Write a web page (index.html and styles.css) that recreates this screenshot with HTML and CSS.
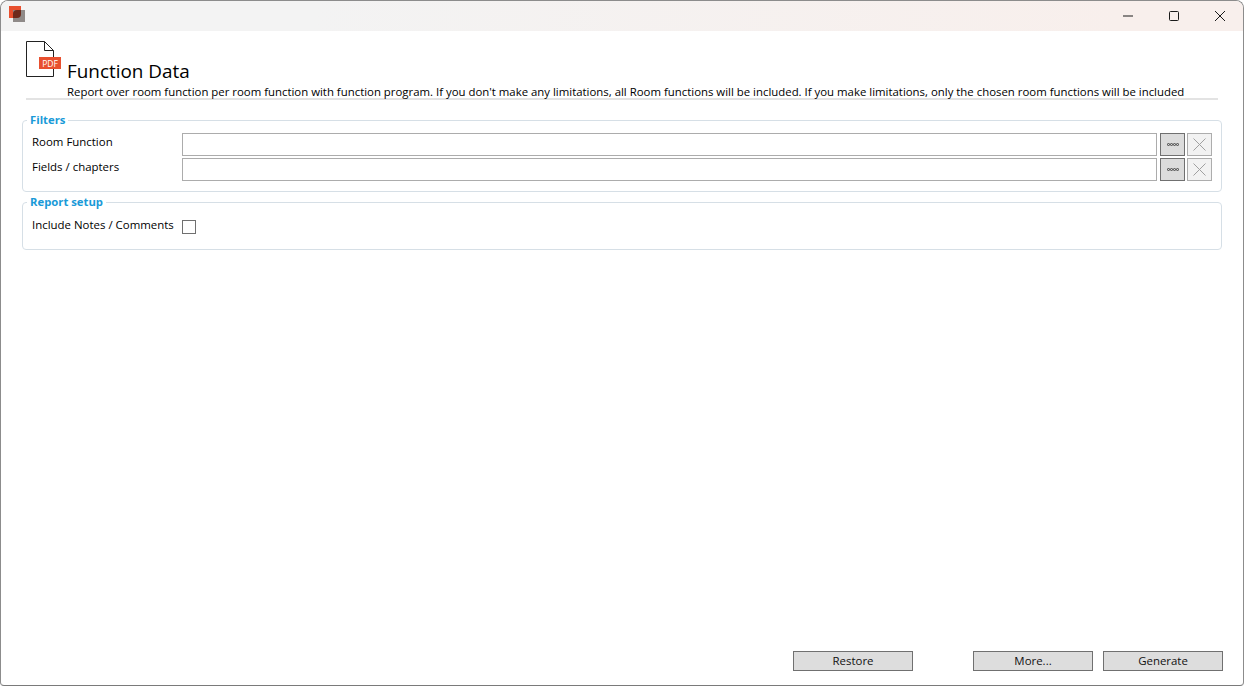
FILE: index.html
```html
<!DOCTYPE html>
<html lang="en">
<head>
<meta charset="utf-8">
<title>Function Data</title>
<link rel="stylesheet" href="styles.css">
</head>
<body>
<div class="window">
  <div class="titlebar">
    <svg class="app-icon" width="16" height="16" viewBox="0 0 16 16">
      <rect x="0" y="0" width="12" height="12" fill="#e8502f"/>
      <rect x="4" y="4" width="12" height="12" fill="#8f8a88"/>
      <path d="M4 12V8a4 4 0 0 1 4-4h4v4a4 4 0 0 1-4 4z" fill="#6d2a1c"/>
    </svg>
    <div class="controls">
      <svg class="ctl" width="46" height="30" viewBox="0 0 46 30"><path d="M18 15h10" stroke="#1a1a1a" fill="none"/></svg>
      <svg class="ctl" width="46" height="30" viewBox="0 0 46 30"><rect x="18.5" y="10.5" width="9" height="9" rx="1" stroke="#1a1a1a" fill="none"/></svg>
      <svg class="ctl" width="46" height="30" viewBox="0 0 46 30"><path d="M18 10l10 10M28 10l-10 10" stroke="#1a1a1a" fill="none"/></svg>
    </div>
  </div>
  <div class="content">
    <header class="header">
      <svg class="pdf-icon" width="36" height="37" viewBox="0 0 36 37">
        <path d="M.5.5h18l9 9v26H.5z" fill="#fff" stroke="#222"/>
        <path d="M18.500.5v9h9" fill="none" stroke="#222"/>
        <rect x="13" y="16" width="22" height="12" fill="#e8502f"/>
        <text x="24" y="25.500" class="pdf-text" text-anchor="middle">PDF</text>
      </svg>
      <div class="header-text">
        <h1>Function Data</h1>
        <p>Report over room function per room function with function program. If you don't make any limitations, all Room functions will be included. If you make limitations, only the chosen room functions will be included</p>
      </div>
    </header>
    <fieldset class="group filters">
      <legend>Filters</legend>
      <div class="row">
        <label>Room Function</label>
        <div class="input"></div>
        <button class="pick"><span class="dots"><i></i><i></i><i></i><i></i></span></button>
        <button class="clear"><svg width="13" height="13" viewBox="0 0 13 13"><path d="M.5.5l12 12M12.500.5l-12 12" stroke="#a0a0a0" fill="none"/></svg></button>
      </div>
      <div class="row">
        <label>Fields / chapters</label>
        <div class="input"></div>
        <button class="pick"><span class="dots"><i></i><i></i><i></i><i></i></span></button>
        <button class="clear"><svg width="13" height="13" viewBox="0 0 13 13"><path d="M.5.5l12 12M12.500.5l-12 12" stroke="#a0a0a0" fill="none"/></svg></button>
      </div>
    </fieldset>
    <fieldset class="group setup">
      <legend>Report setup</legend>
      <div class="row check-row">
        <label>Include Notes / Comments</label>
        <span class="checkbox"></span>
      </div>
    </fieldset>
    <div class="spacer"></div>
    <footer class="footer">
      <button class="btn">Restore</button>
      <button class="btn gap-left">More...</button>
      <button class="btn">Generate</button>
    </footer>
  </div>
</div>
</body>
</html>
```
FILE: styles.css
```css
* { box-sizing: border-box; }
html, body { margin: 0; height: 100%; }
body { background: #fff; font-family: "Open Sans", "Noto Sans", sans-serif; font-size: 11.45px; color: #000; overflow: hidden; }
.window { width: 1244px; height: 686px; border: 1px solid #8c8c8c; border-bottom-color: #7a7a7a; border-radius: 8px 8px 4px 4px; display: flex; flex-direction: column; overflow: hidden; background: #fff; }
.titlebar { height: 30px; flex: none; display: flex; align-items: center; justify-content: space-between; background: linear-gradient(90deg, #f3f3f3 0%, #f3f3f3 25%, #f8efec 90%); padding-left: 8px; }
.app-icon { display: block; margin-top: -4px; }
.controls { display: flex; }
.ctl { display: block; }
.content { flex: 1; display: flex; flex-direction: column; padding: 10px 20px 14px 21px; min-height: 0; }
.header { display: flex; margin-left: 4px; margin-right: 5px; border-bottom: 2px solid #e3e3e3; height: 59px; flex: none; }
.pdf-icon { flex: none; display: block; }
.pdf-text { font-family: "Open Sans", sans-serif; font-size: 8.5px; font-weight: 500; fill: #fff; }
.header-text { margin-left: 5px; padding-top: 18px; min-width: 0; }
h1 { margin: 0; font-size: 18.9px; font-weight: 400; line-height: 24px; white-space: nowrap; }
p { margin: 1px 0 0; font-size: 11.4px; line-height: 16px; white-space: nowrap; }
.group { margin: 0 1px 0 0; border: 1px solid #d6dfe6; border-radius: 4px; padding: 0 9px 0 9px; min-width: 0; flex: none; }
.group legend { color: #1a9ad8; font-weight: 700; font-size: 11.3px; line-height: 16px; padding: 0 3px; margin-left: -5px; }
.filters { margin-top: 12px; height: 80px; }
.setup { margin-top: 2px; height: 56px; }
.row { display: flex; align-items: stretch; height: 23px; margin-bottom: 2px; margin-top: 2px; }
.filters legend + .row { margin-top: 5px; }
.row label { width: 150px; flex: none; line-height: 17px; }
.input { flex: 1; border: 1px solid #acacac; background: #fff; }
.pick, .clear { width: 25px; height: 23px; padding: 0; flex: none; display: flex; align-items: center; justify-content: center; }
.pick { background: #dcdcdc; border: 1px solid #707070; margin-left: 3px; }
.clear { background: #f2f2f2; border: 1px solid #adadad; margin-left: 2px; }
.clear svg { display: block; margin-right: 1px; }
.dots { display: flex; }
.dots i { width: 3px; height: 3px; border: 1px solid #666; border-radius: 1px; display: block; }
.check-row { margin-top: 6px; }
.checkbox { width: 14px; height: 14px; border: 1px solid #707070; background: #fff; margin-top: 4px; }
.spacer { flex: 1; }
.footer { display: flex; justify-content: flex-end; gap: 10px; flex: none; }
.btn { width: 120px; height: 20px; padding: 0; border: 1px solid #707070; background: #dddddd; font: inherit; color: #111; line-height: 18px; }
.gap-left { margin-left: 50px; }
```
